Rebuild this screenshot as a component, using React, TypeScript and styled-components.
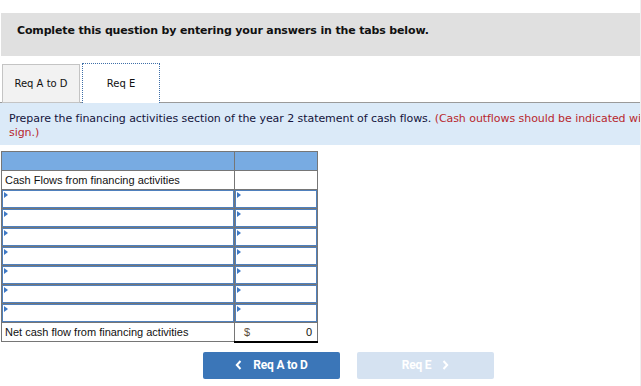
import styled, { createGlobalStyle } from 'styled-components';

const GlobalStyle = createGlobalStyle`
  html, body {
    margin: 0;
    padding: 0;
    background: #efefef;
  }
`;

const Page = styled.div`
  width: 640px;
  min-height: 386px;
  background: #ffffff;
  overflow: hidden;
  padding-top: 13px;
  box-sizing: border-box;
  font-family: 'DejaVu Sans', Verdana, sans-serif;
`;

const Banner = styled.div`
  height: 43px;
  box-sizing: border-box;
  margin-left: 1px;
  background: #e0e0e0;
  padding: 11px 0 0 16px;
  font-size: 11px;
  line-height: 14px;
  letter-spacing: -0.15px;
  font-weight: bold;
  color: #111;
  white-space: nowrap;
`;

const TabBar = styled.div`
  display: flex;
  align-items: flex-end;
  gap: 2px;
  margin-top: 6px;
  padding-left: 2px;
  height: 40px;
  border-bottom: 1px solid #9a9a9a;
`;

const Tab = styled.div<{ $active?: boolean }>`
  width: 78px;
  height: ${(p) => (p.$active ? '40px' : '39px')};
  box-sizing: border-box;
  margin-bottom: -1px;
  display: flex;
  align-items: center;
  justify-content: center;
  font-size: 10px;
  color: #111;
  background: ${(p) => (p.$active ? '#ffffff' : '#f2f2f2')};
  border: ${(p) => (p.$active ? '1px dotted #3f6fa8' : '1px solid #c4c4c4')};
  border-bottom: ${(p) => (p.$active ? 'none' : '1px solid #c4c4c4')};
`;

const Instructions = styled.div`
  height: 42px;
  background: #dbeaf8;
  box-sizing: border-box;
  padding: 9px 0 0 9px;
  font-size: 11px;
  line-height: 14px;
  letter-spacing: -0.06px;
  color: #14143c;
  white-space: nowrap;
  overflow: hidden;
`;

const Note = styled.span`
  color: #b8282e;
`;

const Table = styled.table`
  margin: 6px 0 0 1px;
  border-collapse: collapse;
  width: 317px;
  font-family: 'Liberation Sans', Arial, sans-serif;
  font-size: 11px;
  color: #111;
`;

const Cell = styled.td<{ $wide?: boolean }>`
  border: 1px solid #767676;
  height: 19px;
  padding: 0;
  width: ${(p) => (p.$wide ? '233px' : '83px')};
  box-sizing: border-box;
`;

const HeadCell = styled(Cell)`
  background: #78abe2;
`;

const LabelCell = styled(Cell)`
  padding-left: 3px;
`;

const InputBox = styled.div`
  position: relative;
  height: 18px;
  box-sizing: border-box;
  border: 1px solid #4f80bd;

  &::before {
    content: '';
    position: absolute;
    left: 1px;
    top: 1px;
    border-left: 4px solid #3d78c4;
    border-top: 3px solid transparent;
    border-bottom: 3px solid transparent;
  }
`;

const TotalCell = styled(Cell)`
  border-top: 1px solid #000;
  border-bottom: 2px solid #000;
  padding: 0 5px 0 9px;
`;

const TotalInner = styled.div`
  display: flex;
  justify-content: space-between;
  align-items: center;
`;

const Dollar = styled.span`
  color: #5a4a3a;
`;

const ButtonRow = styled.div`
  display: flex;
  gap: 17px;
  margin: 9px 0 0 203px;
`;

const NavButton = styled.button<{ $disabled?: boolean }>`
  width: 137px;
  height: 27px;
  border: none;
  border-radius: 2px;
  display: flex;
  align-items: center;
  justify-content: center;
  gap: 11px;
  font-family: Roboto, 'Liberation Sans', sans-serif;
  font-weight: bold;
  font-size: 12px;
  letter-spacing: -0.2px;
  color: #ffffff;
  background: ${(p) => (p.$disabled ? '#d5e2f1' : '#3b76b8')};
`;

const Chevron = ({ dir }: { dir: 'left' | 'right' }) => (
  <svg width="7" height="10" viewBox="0 0 7 10">
    <path
      d={dir === 'left' ? 'M5.5 1 L1.8 5 L5.5 9' : 'M1.5 1 L5.2 5 L1.5 9'}
      fill="none"
      stroke="#ffffff"
      strokeWidth="2"
    />
  </svg>
);

const inputRows = [1, 2, 3, 4, 5, 6, 7];

export default function App() {
  return (
    <>
      <GlobalStyle />
      <Page>
        <Banner>Complete this question by entering your answers in the tabs below.</Banner>
        <TabBar>
          <Tab>Req A to D</Tab>
          <Tab $active>Req E</Tab>
        </TabBar>
        <Instructions>
          Prepare the financing activities section of the year 2 statement of cash flows.{' '}
          <Note>(Cash outflows should be indicated with a minus</Note>
          <br />
          <Note>sign.)</Note>
        </Instructions>
        <Table>
          <tbody>
            <tr>
              <HeadCell $wide />
              <HeadCell />
            </tr>
            <tr>
              <LabelCell $wide>Cash Flows from financing activities</LabelCell>
              <Cell />
            </tr>
            {inputRows.map((r) => (
              <tr key={r}>
                <Cell $wide>
                  <InputBox />
                </Cell>
                <Cell>
                  <InputBox />
                </Cell>
              </tr>
            ))}
            <tr>
              <LabelCell $wide>Net cash flow from financing activities</LabelCell>
              <TotalCell>
                <TotalInner>
                  <Dollar>$</Dollar>
                  <span>0</span>
                </TotalInner>
              </TotalCell>
            </tr>
          </tbody>
        </Table>
        <ButtonRow>
          <NavButton>
            <Chevron dir="left" />
            Req A to D
          </NavButton>
          <NavButton $disabled>
            Req E
            <Chevron dir="right" />
          </NavButton>
        </ButtonRow>
      </Page>
    </>
  );
}
